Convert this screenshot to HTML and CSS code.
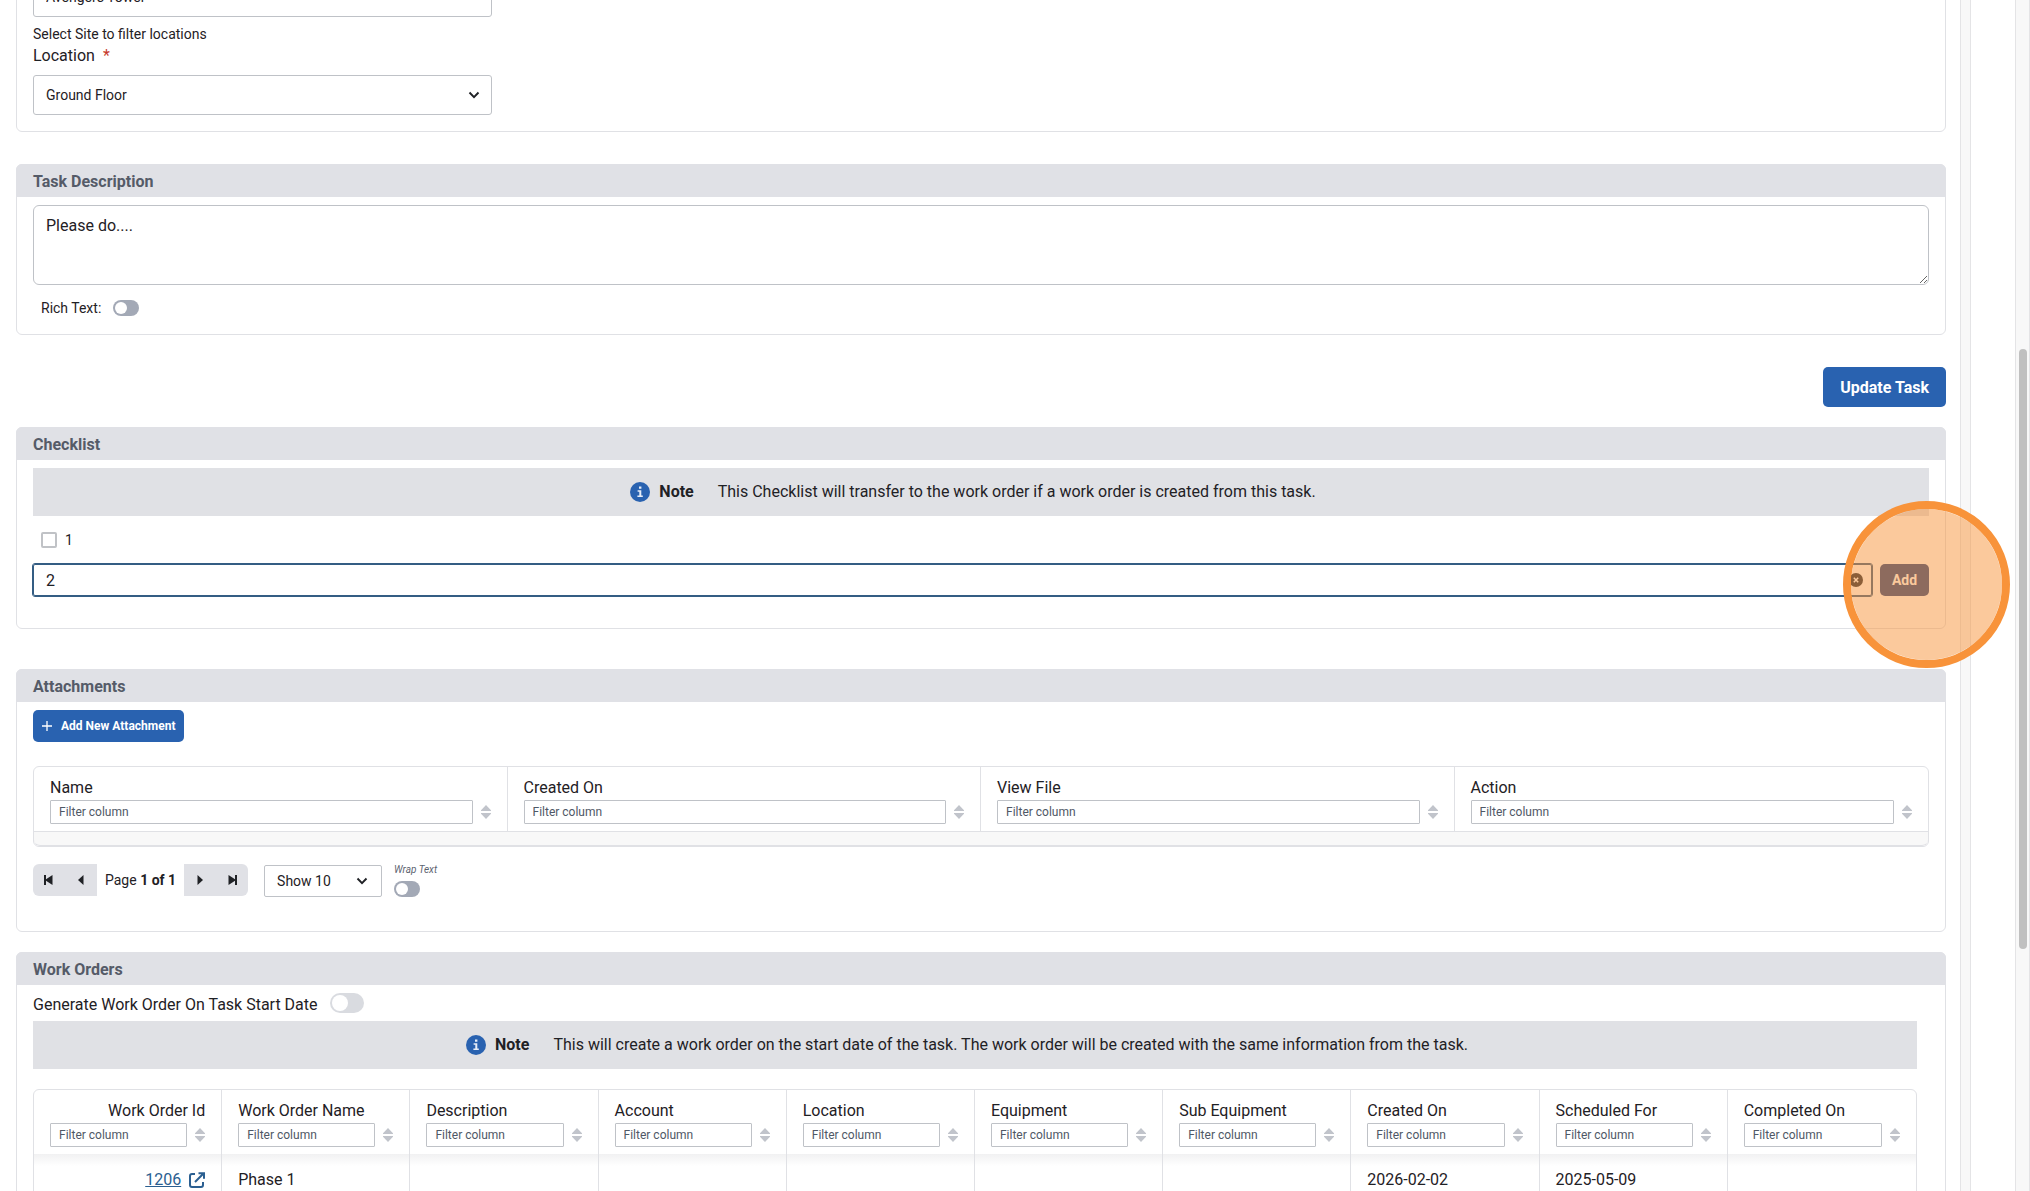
FILE: index.html
```html
<!DOCTYPE html>
<html lang="en">

<head>
    <meta charset="UTF-8">
    <meta name="viewport" content="width=device-width, initial-scale=1.0">
    <title>Edit Task</title>
    <link rel="stylesheet" href="styles.css">
</head>

<body>
    <svg class="sprite" aria-hidden="true">
        <symbol id="chevron" viewBox="0 0 12 12">
            <path d="M1.5 3.5 6 8.2l4.500-4.700" fill="none" stroke="currentColor" stroke-width="1.900" />
        </symbol>
        <symbol id="info" viewBox="0 0 20 20">
            <circle cx="10" cy="10" r="10" fill="#2962b0" />
            <path d="M9 4.500h2.400v2.200H9zM7.600 8.300h3.700v5.200h1.500V15H7.400v-1.500h1.900V9.800H7.600z" fill="#e6edf8" />
        </symbol>
        <symbol id="sort" viewBox="0 0 10 14">
            <path d="M5 0 10 5.200V6H0v-.8zM0 8h10v.8L5 14 0 8.800z" fill="#c1c4cb" />
        </symbol>
    </svg>

    <main class="content">
        <section class="panel panel-site">
            <div class="select">
                <select id="site" aria-label="Site">
                    <option>Avengers Tower</option>
                </select>
            </div>
            <p class="hint">Select Site to filter locations</p>
            <label class="field-label" for="location">Location <span class="required">*</span></label>
            <div class="select">
                <select id="location">
                    <option>Ground Floor</option>
                </select>
                <svg class="chevron"><use href="#chevron" /></svg>
            </div>
        </section>

        <section class="panel panel-description">
            <h2>Task Description</h2>
            <div class="panel-body">
                <textarea id="description" aria-label="Task Description">Please do....</textarea>
                <div class="rich-text">
                    <label for="richText">Rich Text:</label>
                    <input type="checkbox" class="toggle" id="richText">
                </div>
            </div>
        </section>

        <div class="form-actions">
            <button type="submit" class="btn btn-large">Update Task</button>
        </div>

        <section class="panel panel-checklist">
            <h2>Checklist</h2>
            <div class="panel-body">
                <div class="note">
                    <svg class="info"><use href="#info" /></svg>
                    <strong>Note</strong>
                    <span>This Checklist will transfer to the work order if a work order is created from this task.</span>
                </div>
                <div class="check-item">
                    <input type="checkbox" id="item1">
                    <label for="item1">1</label>
                </div>
                <div class="add-item">
                    <div class="add-input">
                        <input type="text" id="newItem" aria-label="New checklist item" value="2">
                        <button type="button" class="clear" aria-label="Clear">
                            <svg viewBox="0 0 14 14">
                                <circle cx="7" cy="7" r="7" fill="#1f2937" />
                                <path d="m4.800 4.800 4.400 4.400m0-4.400-4.400 4.400" stroke="#fff" stroke-width="1.500" />
                            </svg>
                        </button>
                    </div>
                    <div class="add-action">
                        <button type="button" class="btn btn-add">Add</button>
                        <span class="click-marker"></span>
                    </div>
                </div>
            </div>
        </section>

        <section class="panel panel-attachments">
            <h2>Attachments</h2>
            <div class="panel-body">
                <button type="button" class="btn btn-small">
                    <svg viewBox="0 0 10 10"><path d="M5 0v10M0 5h10" stroke="#fff" stroke-width="1.300" /></svg>
                    Add New Attachment
                </button>
                <table class="grid attachments">
                    <thead>
                        <tr>
                            <th><label for="a1">Name</label><div class="filter"><input type="text" id="a1" placeholder="Filter column"><svg><use href="#sort" /></svg></div></th>
                            <th><label for="a2">Created On</label><div class="filter"><input type="text" id="a2" placeholder="Filter column"><svg><use href="#sort" /></svg></div></th>
                            <th><label for="a3">View File</label><div class="filter"><input type="text" id="a3" placeholder="Filter column"><svg><use href="#sort" /></svg></div></th>
                            <th><label for="a4">Action</label><div class="filter"><input type="text" id="a4" placeholder="Filter column"><svg><use href="#sort" /></svg></div></th>
                        </tr>
                    </thead>
                    <tbody>
                        <tr>
                            <td colspan="4"></td>
                        </tr>
                    </tbody>
                </table>
                <div class="pager">
                    <div class="pages">
                        <button type="button" class="first" aria-label="First page"><svg viewBox="0 0 12 12"><path d="M1 1h2v4.200L9.500 1v10L3 6.800V11H1z" /></svg></button>
                        <button type="button" aria-label="Previous page"><svg viewBox="0 0 12 12"><path d="M8.500 1v10L3 6z" /></svg></button>
                        <span>Page <strong>1 of 1</strong></span>
                        <button type="button" aria-label="Next page"><svg viewBox="0 0 12 12"><path d="M3.500 1v10L9 6z" /></svg></button>
                        <button type="button" class="last" aria-label="Last page"><svg viewBox="0 0 12 12"><path d="M11 1H9v4.200L2.500 1v10L9 6.800V11h2z" /></svg></button>
                    </div>
                    <div class="select page-size">
                        <select id="pageSize" aria-label="Rows per page">
                            <option>Show 10</option>
                        </select>
                        <svg class="chevron"><use href="#chevron" /></svg>
                    </div>
                    <div class="wrap-text">
                        <label for="wrapText">Wrap Text</label>
                        <input type="checkbox" class="toggle" id="wrapText">
                    </div>
                </div>
            </div>
        </section>

        <section class="panel panel-orders">
            <h2>Work Orders</h2>
            <div class="panel-body">
                <div class="generate">
                    <label for="generate">Generate Work Order On Task Start Date</label>
                    <input type="checkbox" class="toggle toggle-large" id="generate">
                </div>
                <div class="note">
                    <svg class="info"><use href="#info" /></svg>
                    <strong>Note</strong>
                    <span>This will create a work order on the start date of the task. The work order will be created with the same information from the task.</span>
                </div>
                <table class="grid orders">
                    <thead>
                        <tr>
                            <th class="right"><label for="w1">Work Order Id</label><div class="filter"><input type="text" id="w1" placeholder="Filter column"><svg><use href="#sort" /></svg></div></th>
                            <th><label for="w2">Work Order Name</label><div class="filter"><input type="text" id="w2" placeholder="Filter column"><svg><use href="#sort" /></svg></div></th>
                            <th><label for="w3">Description</label><div class="filter"><input type="text" id="w3" placeholder="Filter column"><svg><use href="#sort" /></svg></div></th>
                            <th><label for="w4">Account</label><div class="filter"><input type="text" id="w4" placeholder="Filter column"><svg><use href="#sort" /></svg></div></th>
                            <th><label for="w5">Location</label><div class="filter"><input type="text" id="w5" placeholder="Filter column"><svg><use href="#sort" /></svg></div></th>
                            <th><label for="w6">Equipment</label><div class="filter"><input type="text" id="w6" placeholder="Filter column"><svg><use href="#sort" /></svg></div></th>
                            <th><label for="w7">Sub Equipment</label><div class="filter"><input type="text" id="w7" placeholder="Filter column"><svg><use href="#sort" /></svg></div></th>
                            <th><label for="w8">Created On</label><div class="filter"><input type="text" id="w8" placeholder="Filter column"><svg><use href="#sort" /></svg></div></th>
                            <th><label for="w9">Scheduled For</label><div class="filter"><input type="text" id="w9" placeholder="Filter column"><svg><use href="#sort" /></svg></div></th>
                            <th><label for="w10">Completed On</label><div class="filter"><input type="text" id="w10" placeholder="Filter column"><svg><use href="#sort" /></svg></div></th>
                        </tr>
                    </thead>
                    <tbody>
                        <tr>
                            <td class="right">
                                <a href="#">1206<svg viewBox="0 0 16 16"><path d="M6 2H3a2 2 0 0 0-2 2v9a2 2 0 0 0 2 2h9a2 2 0 0 0 2-2v-3M6 10l8-8M9.500 1.200H15v5.500" fill="none" stroke="currentColor" stroke-width="2" /></svg></a>
                            </td>
                            <td>Phase 1</td>
                            <td></td>
                            <td></td>
                            <td></td>
                            <td></td>
                            <td></td>
                            <td>2026-02-02</td>
                            <td>2025-05-09</td>
                            <td></td>
                        </tr>
                    </tbody>
                </table>
            </div>
        </section>
    </main>
    <div class="gutter"></div>
    <div class="scrollbar"><div class="thumb"></div></div>
</body>

</html>
```

FILE: styles.css
```css
* {
    box-sizing: border-box;
}

body {
    display: flex;
    height: 100vh;
    margin: 0;
    overflow: hidden;
    background-color: #fff;
    color: #1f2125;
    font-family: Roboto, Arial, sans-serif;
    font-size: 16px;
    line-height: 24px;
}

input,
select,
textarea,
button {
    margin: 0;
    color: inherit;
    font-family: inherit;
}

.sprite {
    position: absolute;
    width: 0;
    height: 0;
}

.content {
    flex: 1;
    min-width: 0;
    padding: 0 14px 0 16px;
}

.gutter {
    width: 11px;
    margin-right: 44px;
    border: 1px solid #e4e4e6;
    border-width: 0 1px;
    background-color: #f8f8f8;
}

.scrollbar {
    width: 15px;
    padding: 349px 2px 0 3px;
    border: 1px solid #e4e4e6;
    border-width: 0 1px;
    background-color: #f8f8f8;
}

.thumb {
    height: 600px;
    border-radius: 4px;
    background-color: #c0c0c0;
}

/* panels */
.panel {
    border: 1px solid #e0e1e5;
    border-radius: 6px;
}

.panel h2 {
    height: 33px;
    margin: -1px -1px 8px;
    padding: 0 17px;
    border-radius: 6px 6px 0 0;
    background-color: #e0e1e6;
    color: #555b68;
    font-size: 16px;
    font-weight: bold;
    line-height: 35px;
}

.panel-body {
    padding: 0 16px;
}

.panel-site {
    margin: -24px 0 32px;
    padding: 0 16px 16px;
}

.panel-description {
    margin-bottom: 32px;
    padding-bottom: 18px;
}

.panel-checklist {
    margin-bottom: 40px;
    padding-bottom: 32px;
}

.panel-attachments {
    margin-bottom: 20px;
    padding-bottom: 34px;
}

/* fields */
.select {
    position: relative;
    width: 459px;
}

.select select {
    display: block;
    width: 100%;
    height: 40px;
    padding: 0 12px;
    appearance: none;
    border: 1px solid #bfc2c7;
    border-radius: 3px;
    background-color: #fff;
    font-size: 14px;
}

.chevron {
    position: absolute;
    top: 50%;
    right: 12px;
    width: 12px;
    height: 12px;
    margin-top: -6px;
    pointer-events: none;
}

.hint {
    margin: 7px 0 0;
    font-size: 14px;
    line-height: 20px;
}

.field-label {
    display: block;
    margin-bottom: 8px;
    line-height: 23px;
}

.required {
    margin-left: 4px;
    color: #c6392b;
}

textarea {
    display: block;
    width: 100%;
    height: 80px;
    padding: 8px 12px;
    border: 1px solid #bfc2c7;
    border-radius: 6px;
    font-size: 16px;
    line-height: 24px;
}

.rich-text {
    display: flex;
    align-items: center;
    gap: 12px;
    height: 16px;
    margin: 15px 8px 0;
    font-size: 14px;
}

.toggle {
    width: 26px;
    height: 16px;
    padding: 2px;
    appearance: none;
    border-radius: 8px;
    background-color: #a3a9b6;
}

.toggle::before {
    content: "";
    display: block;
    width: 12px;
    height: 12px;
    border-radius: 50%;
    background-color: #fff;
}

.toggle-large {
    width: 34px;
    height: 20px;
    border-radius: 10px;
    background-color: #d9dbe0;
}

.toggle-large::before {
    width: 16px;
    height: 16px;
}

/* buttons */
.btn {
    border: none;
    border-radius: 5px;
    background-color: #2962b0;
    color: #fff;
    font-weight: bold;
    cursor: pointer;
}

.btn-large {
    height: 40px;
    padding: 0 17px;
    font-size: 16px;
}

.btn-small {
    display: flex;
    align-items: center;
    gap: 9px;
    height: 32px;
    padding: 0 9px;
    font-size: 12px;
}

.btn-small svg {
    width: 10px;
    height: 10px;
}

.btn-add {
    width: 49px;
    height: 32px;
    padding: 0;
    background-color: #224382;
    font-size: 14px;
}

.form-actions {
    display: flex;
    justify-content: flex-end;
    margin-bottom: 20px;
}

/* notes */
.note {
    display: flex;
    align-items: center;
    justify-content: center;
    height: 48px;
    padding-right: 16px;
    background-color: #e0e1e5;
}

.info {
    width: 20px;
    height: 20px;
    margin-right: 9px;
}

.note strong {
    margin-right: 24px;
}

/* checklist */
.check-item {
    display: flex;
    align-items: center;
    gap: 8px;
    height: 16px;
    margin: 16px 8px;
    font-size: 14px;
}

.check-item input {
    width: 16px;
    height: 16px;
    appearance: none;
    border: 2px solid #c0c2c6;
    border-radius: 2px;
}

.add-item {
    display: flex;
    gap: 8px;
}

.add-input {
    position: relative;
    flex: 1;
}

.add-input input {
    display: block;
    width: 100%;
    height: 32px;
    padding: 0 12px;
    border: 1px solid #345d83;
    border-radius: 2px;
    outline: 1px solid #345d83;
    font-size: 16px;
}

.clear {
    position: absolute;
    top: 9px;
    right: 9px;
    width: 14px;
    height: 14px;
    padding: 0;
    border: none;
    background: none;
}

.clear svg {
    display: block;
}

.add-action {
    position: relative;
    height: 32px;
}

.click-marker {
    position: absolute;
    top: -63px;
    right: -81px;
    width: 167px;
    height: 167px;
    border: 8px solid #f8933a;
    border-radius: 50%;
    background-color: rgba(248, 147, 58, 0.5);
    background-clip: padding-box;
    pointer-events: none;
}

/* tables */
.grid {
    width: 100%;
    margin-top: 24px;
    table-layout: fixed;
    border: 1px solid #e0e1e5;
    border-radius: 6px;
    border-spacing: 0;
}

.grid th {
    height: 64px;
    padding: 8px 16px 7px;
    border-right: 1px solid #e0e1e5;
    font-weight: normal;
    text-align: left;
}

.grid th:last-child,
.grid td:last-child {
    border-right: none;
}

.grid .right {
    text-align: right;
}

.grid th label {
    display: block;
    white-space: nowrap;
}

.filter {
    display: flex;
    align-items: center;
    gap: 8px;
}

.filter input {
    flex: 1;
    min-width: 0;
    height: 24px;
    padding: 0 8px;
    border: 1px solid #bfc2c7;
    border-radius: 1px;
    font-size: 12px;
}

.filter input::placeholder {
    color: #4f5866;
}

.filter svg {
    width: 10px;
    height: 14px;
}

.attachments td {
    height: 15px;
    padding: 0;
    border-top: 1px solid #e0e1e5;
    border-bottom: 1px solid #e0e1e5;
    border-radius: 0 0 6px 6px;
    background-color: #f8f8f8;
}

.orders {
    margin-top: 20px;
}

.orders td {
    height: 51px;
    padding: 0 16px;
    border-right: 1px solid #e0e1e5;
    background-image: linear-gradient(#f1f1f2, #fff 12px);
}

.orders a {
    color: #2b5f91;
}

.orders a svg {
    width: 16px;
    height: 16px;
    margin-left: 8px;
    vertical-align: -3px;
}

.panel-orders .panel-body {
    padding-right: 28px;
}

.generate {
    display: flex;
    gap: 12px;
    height: 28px;
}

/* pager */
.pager {
    display: flex;
    align-items: flex-start;
    margin-top: 17px;
    font-size: 14px;
}

.pages {
    display: flex;
    align-items: center;
    margin-right: 16px;
}

.pages button {
    display: flex;
    align-items: center;
    justify-content: center;
    width: 32px;
    height: 32px;
    padding: 0;
    border: none;
    background-color: #e0e1e6;
}

.pages .first {
    border-radius: 6px 0 0 6px;
}

.pages .last {
    border-radius: 0 6px 6px 0;
}

.pages svg {
    width: 12px;
    height: 12px;
    fill: #1f2125;
}

.pages span {
    padding: 0 8px;
}

.page-size {
    width: 118px;
    margin: 1px 12px 0 0;
}

.page-size select {
    height: 32px;
    border-radius: 2px;
}

.page-size .chevron {
    right: 14px;
}

.wrap-text {
    display: flex;
    flex-direction: column;
    gap: 6px;
    color: #5d6470;
    font-size: 10px;
    font-style: italic;
    line-height: 11px;
}
```
